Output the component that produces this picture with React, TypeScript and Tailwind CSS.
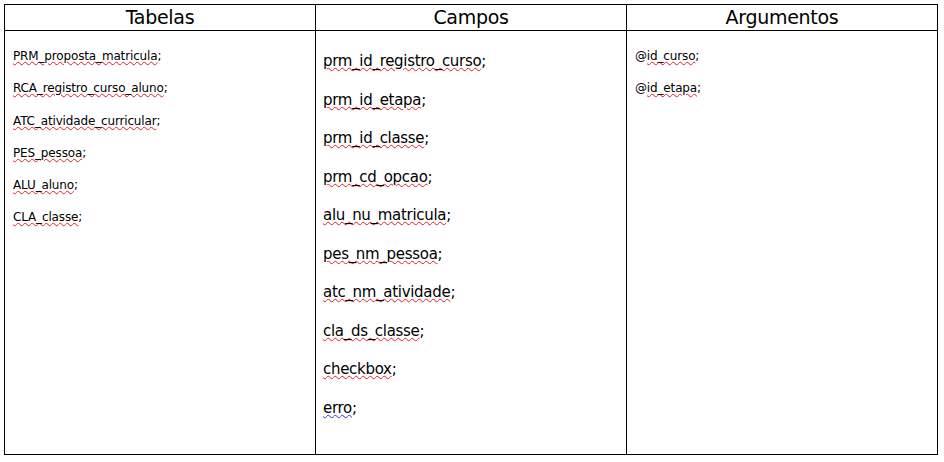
import React from "react";

const font = { fontFamily: '"DejaVu Sans", "Noto Sans", sans-serif' };

function W({ children, blue }: { children: React.ReactNode; blue?: boolean }) {
  return (
    <span
      className={
        blue
          ? "underline decoration-wavy decoration-[#2b3bd6] decoration-1 underline-offset-[1px]"
          : "underline decoration-wavy decoration-[#e0202a] decoration-1 underline-offset-[1px]"
      }
    >
      {children}
    </span>
  );
}

const tabelas = [
  "PRM_proposta_matricula",
  "RCA_registro_curso_aluno",
  "ATC_atividade_curricular",
  "PES_pessoa",
  "ALU_aluno",
  "CLA_classe",
];

const campos = [
  "prm_id_registro_curso",
  "prm_id_etapa",
  "prm_id_classe",
  "prm_cd_opcao",
  "alu_nu_matricula",
  "pes_nm_pessoa",
  "atc_nm_atividade",
  "cla_ds_classe",
  "checkbox",
  "erro",
];

const args = ["id_curso", "id_etapa"];

export default function App() {
  return (
    <div className="w-[944px] h-[462px] bg-white pt-[4px] pl-[4px]" style={font}>
      <div className="w-[934px] h-[451px] border border-black grid grid-cols-[311px_311px_1fr] grid-rows-[26px_1fr] text-black">
        <div className="border-b border-r border-black flex items-center justify-center text-[19px] tracking-[-0.3px]">Tabelas</div>
        <div className="border-b border-r border-black flex items-center justify-center text-[19px] tracking-[-0.3px]">Campos</div>
        <div className="border-b border-black flex items-center justify-center text-[19px] tracking-[-0.3px]">Argumentos</div>

        <div className="border-r border-black pl-[8px] pt-[9px] flex flex-col text-[12px] tracking-[-0.15px]">
          {tabelas.map((t) => (
            <div key={t} className="h-[32.3px] leading-[32px]">
              <W>{t}</W>;
            </div>
          ))}
        </div>
        <div className="border-r border-black pl-[7px] pt-[11px] flex flex-col text-[15px] tracking-[-0.3px]">
          {campos.map((c) => (
            <div key={c} className="h-[38.5px] leading-[38px]">
              <W blue={c === "erro"}>{c}</W>;
            </div>
          ))}
        </div>
        <div className="pl-[8px] pt-[9px] flex flex-col text-[12px] tracking-[-0.15px]">
          {args.map((a) => (
            <div key={a} className="h-[32.3px] leading-[32px]">
              @<W>{a}</W>;
            </div>
          ))}
        </div>
      </div>
    </div>
  );
}
